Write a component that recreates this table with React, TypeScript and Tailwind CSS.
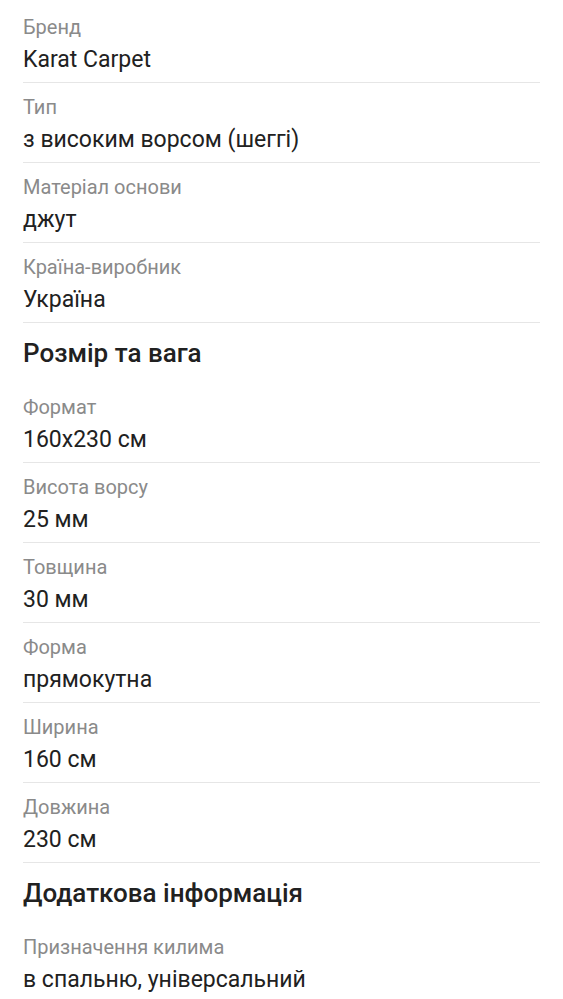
import React from "react";

type Item = { type: "row"; label: string; value: string; last?: boolean } | { type: "head"; text: string };

const items: Item[] = [
  { type: "row", label: "Бренд", value: "Karat Carpet" },
  { type: "row", label: "Тип", value: "з високим ворсом (шеггі)" },
  { type: "row", label: "Матеріал основи", value: "джут" },
  { type: "row", label: "Країна-виробник", value: "Україна" },
  { type: "head", text: "Розмір та вага" },
  { type: "row", label: "Формат", value: "160x230 см" },
  { type: "row", label: "Висота ворсу", value: "25 мм" },
  { type: "row", label: "Товщина", value: "30 мм" },
  { type: "row", label: "Форма", value: "прямокутна" },
  { type: "row", label: "Ширина", value: "160 см" },
  { type: "row", label: "Довжина", value: "230 см" },
  { type: "head", text: "Додаткова інформація" },
  { type: "row", label: "Призначення килима", value: "в спальню, універсальний", last: true },
];

export default function App() {
  return (
    <div
      className="w-[563px] h-[999px] overflow-hidden bg-white px-[23px] pt-[3px]"
      style={{ fontFamily: "Roboto, 'Noto Sans', sans-serif" }}
    >
      {items.map((it, i) =>
        it.type === "row" ? (
          <div
            key={i}
            className={
              it.last
                ? "pt-[12px] pb-[8px]"
                : "pt-[12px] pb-[7px] border-b border-[#e6e6e6]"
            }
          >
            <div className="text-[20px] leading-[24px] text-[#8a8a8a]">{it.label}</div>
            <div className="mt-[6px] text-[23px] leading-[30px] text-[#212121]">{it.value}</div>
          </div>
        ) : (
          <div key={i} className="pt-[14px] pb-[14px]">
            <div className="text-[26px] leading-[32px] font-medium text-[#212121]">{it.text}</div>
          </div>
        )
      )}
    </div>
  );
}
